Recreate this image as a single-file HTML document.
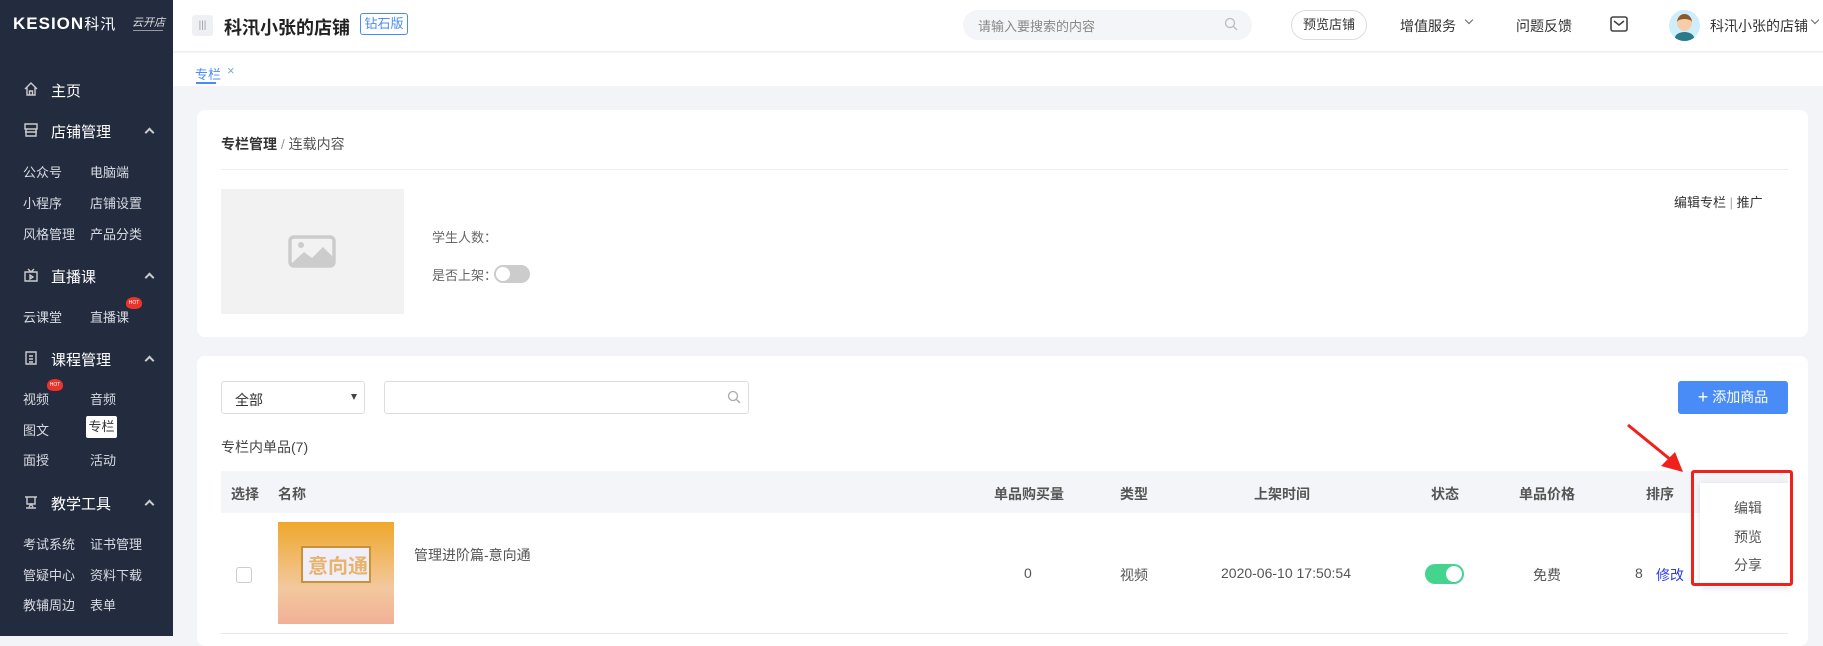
<!DOCTYPE html>
<html><head><meta charset="utf-8"><style>
*{margin:0;padding:0;box-sizing:border-box}
body{width:1823px;height:636px;overflow:hidden;background:#f3f4f8;font-family:"Liberation Sans","Noto Sans CJK SC",sans-serif;color:#333;position:relative}
.a{position:absolute;white-space:nowrap}
#side{position:absolute;left:0;top:0;width:173px;height:636px;background:#232b3e;color:#e6e8ee}
#side .h{font-size:15px;color:#fff}
#side .s{font-size:13px;color:#d8dbe3}
.chev{width:7px;height:7px;border-left:2px solid #ccc;border-top:2px solid #ccc;transform:rotate(45deg)}
.hot{width:16px;height:12px;background:#e8342a;border-radius:50% 50% 40% 40%;color:#fff;font-size:5px;text-align:center;line-height:12px}
.th{font-size:14px;color:#555;font-weight:bold}
.td{font-size:14px;color:#555}
</style></head><body>
<div id="side">
 <div class="a" style="left:13px;top:13px;font-size:17px;font-weight:bold;letter-spacing:1px;color:#fff">KESION<span style="font-weight:normal;font-size:15px">科汛</span></div>
 <div class="a" style="left:132px;top:14px;font-size:11px;font-style:italic;color:#ddd">云开店</div>
 <div class="a" style="left:133px;top:30px;width:30px;height:1px;background:#999"></div>
 <svg class="a" style="left:23px;top:81px" width="16" height="16" viewBox="0 0 16 16" fill="none" stroke="#ccc" stroke-width="1.4"><path d="M2 8 8 2l6 6M4 6.5V14h8V6.5M6.5 14v-4h3v4"/></svg>
 <div class="a h" style="left:51px;top:80px">主页</div>
 <svg class="a" style="left:23px;top:122px" width="16" height="16" viewBox="0 0 16 16" fill="none" stroke="#ccc" stroke-width="1.4"><path d="M2 2h12v5H2zM3 7v7h10V7M2 10h12"/></svg>
 <div class="a h" style="left:51px;top:121px">店铺管理</div><div class="a chev" style="left:146px;top:129px"></div>
 <div class="a s" style="left:23px;top:162px">公众号</div><div class="a s" style="left:90px;top:162px">电脑端</div>
 <div class="a s" style="left:23px;top:193px">小程序</div><div class="a s" style="left:90px;top:193px">店铺设置</div>
 <div class="a s" style="left:23px;top:224px">风格管理</div><div class="a s" style="left:90px;top:224px">产品分类</div>
 <svg class="a" style="left:23px;top:267px" width="16" height="16" viewBox="0 0 16 16" fill="none" stroke="#ccc" stroke-width="1.4"><path d="M2 5h12v9H2zM5 2l3 3 3-3M7 8v4l3-2z"/></svg>
 <div class="a h" style="left:51px;top:266px">直播课</div><div class="a chev" style="left:146px;top:274px"></div>
 <div class="a s" style="left:23px;top:307px">云课堂</div><div class="a s" style="left:90px;top:307px">直播课</div><div class="a hot" style="left:126px;top:297px">HOT</div>
 <svg class="a" style="left:23px;top:350px" width="16" height="16" viewBox="0 0 16 16" fill="none" stroke="#ccc" stroke-width="1.4"><path d="M3 2h10v12H3zM6 6h4M6 9h4M6 12h4"/></svg>
 <div class="a h" style="left:51px;top:349px">课程管理</div><div class="a chev" style="left:146px;top:357px"></div>
 <div class="a s" style="left:23px;top:389px">视频</div><div class="a hot" style="left:47px;top:379px">HOT</div><div class="a s" style="left:90px;top:389px">音频</div>
 <div class="a s" style="left:23px;top:420px">图文</div>
 <div class="a" style="left:86px;top:416px;width:31px;height:22px;background:#fff;border-radius:2px;color:#333;font-size:13px;text-align:center;line-height:22px">专栏</div>
 <div class="a s" style="left:23px;top:450px">面授</div><div class="a s" style="left:90px;top:450px">活动</div>
 <svg class="a" style="left:23px;top:494px" width="16" height="16" viewBox="0 0 16 16" fill="none" stroke="#ccc" stroke-width="1.4"><path d="M2 3h12M4 3v7h8V3M6 13l2-3 2 3M3 14h10"/></svg>
 <div class="a h" style="left:51px;top:493px">教学工具</div><div class="a chev" style="left:146px;top:501px"></div>
 <div class="a s" style="left:23px;top:534px">考试系统</div><div class="a s" style="left:90px;top:534px">证书管理</div>
 <div class="a s" style="left:23px;top:565px">管疑中心</div><div class="a s" style="left:90px;top:565px">资料下载</div>
 <div class="a s" style="left:23px;top:595px">教辅周边</div><div class="a s" style="left:90px;top:595px">表单</div>
</div>
<div class="a" style="left:173px;top:0;width:1650px;height:52px;background:#fff;border-bottom:1px solid #f0f0f3"></div>
<div class="a" style="left:192px;top:15px;width:21px;height:21px;background:#eef0f4;border-radius:3px;color:#99a;font-size:10px;text-align:center;line-height:21px">|||</div>
<div class="a" style="left:224px;top:14px;font-size:18px;font-weight:bold;color:#222">科汛小张的店铺</div>
<div class="a" style="left:360px;top:13px;width:48px;height:22px;border:1px solid #4a8cf7;border-radius:3px;color:#4a8cf7;font-size:13px;text-align:center;line-height:20px">钻石版</div>
<div class="a" style="left:963px;top:10px;width:289px;height:30px;background:#f4f5f8;border-radius:15px"></div>
<div class="a" style="left:978px;top:16px;font-size:13px;color:#888">请输入要搜索的内容</div>
<svg class="a" style="left:1224px;top:17px" width="14" height="14" viewBox="0 0 14 14" fill="none" stroke="#bbb" stroke-width="1.3"><circle cx="6" cy="6" r="4.5"/><path d="M9.5 9.5 13 13"/></svg>
<div class="a" style="left:1291px;top:10px;width:76px;height:30px;border:1px solid #ddd;border-radius:15px;font-size:13px;text-align:center;line-height:28px;color:#333">预览店铺</div>
<div class="a" style="left:1400px;top:16px;font-size:14px;color:#333">增值服务</div>
<div class="a" style="left:1466px;top:17px;width:6px;height:6px;border-right:1.3px solid #666;border-bottom:1.3px solid #666;transform:rotate(45deg)"></div>
<div class="a" style="left:1516px;top:16px;font-size:14px;color:#333">问题反馈</div>
<svg class="a" style="left:1610px;top:16px" width="18" height="16" viewBox="0 0 18 16" fill="none" stroke="#444" stroke-width="1.6"><rect x="1" y="1" width="16" height="14" rx="2"/><path d="M4 5l5 4 5-4"/></svg>
<div class="a" style="left:1669px;top:10px;width:31px;height:31px;border-radius:50%;background:#cfeefb;overflow:hidden"><div class="a" style="left:8px;top:4px;width:15px;height:17px;border-radius:50%;background:#f5cda8;border-top:5px solid #8a5a2b"></div><div class="a" style="left:6px;top:22px;width:19px;height:12px;border-radius:50% 50% 0 0;background:#2a7a8a"></div></div>
<div class="a" style="left:1710px;top:16px;font-size:14px;color:#333">科汛小张的店铺</div>
<div class="a" style="left:1812px;top:17px;width:6px;height:6px;border-right:1.3px solid #666;border-bottom:1.3px solid #666;transform:rotate(45deg)"></div>
<div class="a" style="left:173px;top:53px;width:1650px;height:33px;background:#fff"></div>
<div class="a" style="left:195px;top:64px;font-size:13px;color:#4a8cf7">专栏</div>
<div class="a" style="left:196px;top:82px;width:20px;height:2px;background:#4a8cf7"></div>
<div class="a" style="left:227px;top:63px;font-size:13px;color:#8ab">×</div>
<div class="a" style="left:197px;top:110px;width:1611px;height:227px;background:#fff;border-radius:8px"></div>
<div class="a" style="left:221px;top:134px;font-size:14px;color:#333"><b>专栏管理</b> <span style="color:#999">/</span> <span style="color:#555">连载内容</span></div>
<div class="a" style="left:221px;top:169px;width:1567px;height:1px;background:#eee"></div>
<div class="a" style="left:221px;top:189px;width:183px;height:125px;background:#f2f2f2"></div>
<svg class="a" style="left:288px;top:235px" width="48" height="33" viewBox="0 0 48 33" fill="none"><rect x="2" y="2" width="44" height="29" rx="4" stroke="#ccc" stroke-width="3.5"/><circle cx="13" cy="10" r="3" fill="#ccc"/><path d="M4 28 16 17l8 6 11-11 10 10v8H4z" fill="#ccc"/></svg>
<div class="a" style="left:432px;top:227px;font-size:13px;color:#666">学生人数：</div>
<div class="a" style="left:432px;top:265px;font-size:13px;color:#666">是否上架：</div>
<div class="a" style="left:494px;top:265px;width:36px;height:18px;border-radius:9px;background:#ccc"><div class="a" style="left:2px;top:2px;width:14px;height:14px;border-radius:50%;background:#fff"></div></div>
<div class="a" style="left:1674px;top:192px;font-size:13px;color:#333">编辑专栏<span style="color:#aaa"> | </span> 推广</div>
<div class="a" style="left:197px;top:356px;width:1611px;height:290px;background:#fff;border-radius:8px"></div>
<div class="a" style="left:221px;top:381px;width:144px;height:33px;border:1px solid #ddd;border-radius:3px"></div>
<div class="a" style="left:235px;top:390px;font-size:14px;color:#333">全部</div>
<div class="a" style="left:351px;top:394px;width:0;height:0;border-left:3.5px solid transparent;border-right:3.5px solid transparent;border-top:6px solid #444"></div>
<div class="a" style="left:384px;top:381px;width:365px;height:33px;border:1px solid #ddd;border-radius:3px"></div>
<svg class="a" style="left:727px;top:390px" width="14" height="14" viewBox="0 0 14 14" fill="none" stroke="#aaa" stroke-width="1.3"><circle cx="6" cy="6" r="4.5"/><path d="M9.5 9.5 13 13"/></svg>
<div class="a" style="left:1678px;top:381px;width:110px;height:33px;background:#4a8cf7;border-radius:3px;color:#fff;font-size:14px;text-align:center;line-height:33px"><span style="font-size:18px;vertical-align:-1px">+</span> 添加商品</div>
<div class="a" style="left:221px;top:437px;font-size:14px;color:#444">专栏内单品(7)</div>
<div class="a" style="left:221px;top:471px;width:1567px;height:42px;background:#f4f5f9"></div>
<div class="a th" style="left:231px;top:484px">选择</div>
<div class="a th" style="left:278px;top:484px">名称</div>
<div class="a th" style="left:994px;top:484px">单品购买量</div>
<div class="a th" style="left:1120px;top:484px">类型</div>
<div class="a th" style="left:1254px;top:484px">上架时间</div>
<div class="a th" style="left:1431px;top:484px">状态</div>
<div class="a th" style="left:1519px;top:484px">单品价格</div>
<div class="a th" style="left:1646px;top:484px">排序</div>
<div class="a" style="left:236px;top:567px;width:16px;height:16px;border:1px solid #ccc;border-radius:3px"></div>
<div class="a" style="left:278px;top:522px;width:116px;height:102px;background:linear-gradient(#efa82b,#f3c89e 65%,#f1b096)"><div class="a" style="left:23px;top:24px;width:70px;height:37px;background:#efeef9;border:2px solid #c9913a"></div><div class="a" style="left:30px;top:28px;font-size:20px;font-weight:bold;color:#e8b36a">意向通</div></div>
<div class="a td" style="left:414px;top:545px">管理进阶篇-意向通</div>
<div class="a td" style="left:1024px;top:565px">0</div>
<div class="a td" style="left:1120px;top:565px">视频</div>
<div class="a td" style="left:1221px;top:565px">2020-06-10 17:50:54</div>
<div class="a" style="left:1425px;top:564px;width:39px;height:20px;border-radius:10px;background:#45d48e"><div class="a" style="left:21px;top:2px;width:16px;height:16px;border-radius:50%;background:#fff"></div></div>
<div class="a td" style="left:1533px;top:565px">免费</div>
<div class="a td" style="left:1635px;top:565px">8</div>
<div class="a" style="left:1656px;top:565px;font-size:14px;color:#2b3bea">修改</div>
<div class="a" style="left:221px;top:633px;width:1567px;height:1px;background:#e8e8e8"></div>
<div class="a" style="left:1700px;top:483px;width:90px;height:104px;background:#fff;box-shadow:0 1px 6px rgba(0,0,0,.12)"></div>
<div class="a" style="left:1734px;top:498px;font-size:14px;color:#555">编辑</div>
<div class="a" style="left:1734px;top:527px;font-size:14px;color:#555">预览</div>
<div class="a" style="left:1734px;top:555px;font-size:14px;color:#555">分享</div>
<div class="a" style="left:1691px;top:470px;width:102px;height:116px;border:3px solid #f0201a;border-radius:3px"></div>
<svg class="a" style="left:1625px;top:422px" width="62" height="52" viewBox="0 0 62 52"><path d="M3 3 L46 38" stroke="#f0201a" stroke-width="3"/><path d="M58 50 L36 44 L50 30 Z" fill="#f0201a"/></svg>
</body></html>
